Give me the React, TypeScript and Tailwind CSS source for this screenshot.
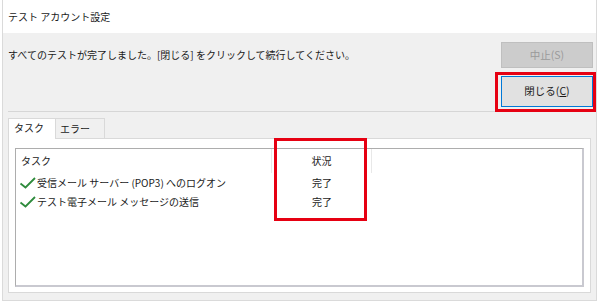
import { Fragment } from 'react';

const rows = [
  { task: '受信メール サーバー (POP3) へのログオン', status: '完了' },
  { task: 'テスト電子メール メッセージの送信', status: '完了' },
];

function Check() {
  return (
    <svg width="17" height="12" viewBox="0 0 17 12" className="shrink-0">
      <path d="M1.5 6.5 L6.5 10.5 L16 1" fill="none" stroke="#2e8b3c" strokeWidth="1.8" />
    </svg>
  );
}

export default function App() {
  return (
    <div className="relative w-[600px] h-[305px] bg-white text-[10px] text-[#1a1a1a] font-['Noto_Sans_CJK_JP',sans-serif] leading-none">
      <div className="ml-[2px] w-[595px] h-[301px] border-x border-b border-[#dadada] flex flex-col">
        {/* title bar */}
        <div className="h-[33px] bg-white flex items-center pl-[5px]">テスト アカウント設定</div>

        <div className="flex-1 bg-[#f0f0f0] flex flex-col">
          {/* message + buttons */}
          <div className="h-[78px] flex">
            <div className="flex-1 pl-[5px] pt-[17px]">
              すべてのテストが完了しました。[閉じる] をクリックして続行してください。
            </div>
            <div className="flex flex-col gap-[8px] pt-[9px] pr-[3px]">
              <button className="w-[92px] h-[26px] bg-[#cccccc] border border-[#bfbfbf] text-[#9a9a9a] text-[10.5px]">
                中止(S)
              </button>
              <button className="w-[92px] h-[31px] bg-[#e1e1e1] border border-[#0078d7] text-[10.5px] text-[#1a1a1a]">
                閉じる(<span className="underline">C</span>)
              </button>
            </div>
          </div>

          {/* tab area */}
          <div className="ml-[5px] flex-1 border-t border-[#d6d6d6] pt-[5px] flex flex-col">
            <div className="flex h-[21px] items-end">
              <div className="w-[48px] h-[21px] bg-white border-t border-l border-r border-[#d9d9d9] pl-[5px] pt-[4px] relative z-10 -mb-px">
                タスク
              </div>
              <div className="w-[49px] h-[20px] bg-[#f0f0f0] border-t border-r border-[#d9d9d9] pl-[4px] pt-[5px]">
                エラー
              </div>
            </div>
            <div className="w-[583px] h-[155px] bg-white border border-[#d9d9d9] pt-[9px] pl-[6px]">
              <div className="w-[569px] h-[139px] border-l border-t border-[#adadad] border-r-2 border-b-2 border-r-[#c9c9d0] border-b-[#c9c9d0]">
                <div className="grid grid-cols-[256px_100px_1fr]">
                  <div className="h-[24px] flex items-center pl-[5px] border-r border-[#e8e8e8]">タスク</div>
                  <div className="h-[24px] flex items-center justify-center border-r border-[#e8e8e8]">状況</div>
                  <div className="h-[24px]" />
                  {rows.map((r) => (
                    <Fragment key={r.task}>
                      <div className="h-[19px] flex items-center pl-[3px] gap-[1px] whitespace-nowrap">
                        <Check />
                        <span>{r.task}</span>
                      </div>
                      <div className="h-[19px] flex items-center justify-center">{r.status}</div>
                      <div className="h-[19px]" />
                    </Fragment>
                  ))}
                </div>
              </div>
            </div>
          </div>
        </div>
      </div>

      {/* red annotation boxes */}
      <div className="absolute left-[495px] top-[72px] w-[101px] h-[40px] border-[3px] border-[#e60012]" />
      <div className="absolute left-[274px] top-[138px] w-[93px] h-[83px] border-[3px] border-[#e60012]" />
    </div>
  );
}
